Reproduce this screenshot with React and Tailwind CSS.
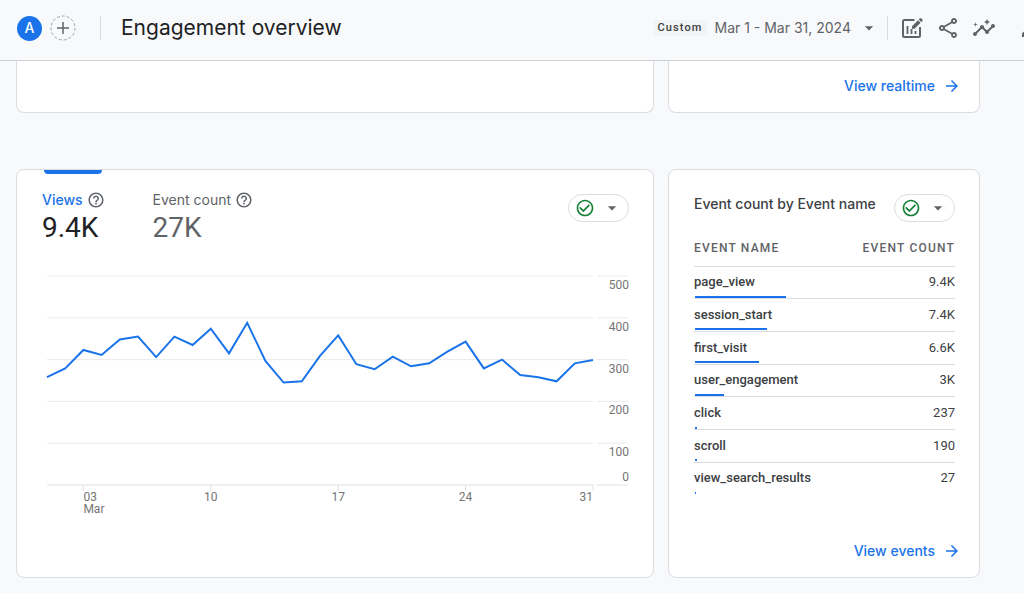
import React from "react";
import {
  MdArrowDropDown,
  MdArrowForward,
  MdCheckCircleOutline,
  MdHelpOutline,
  MdOutlineInsights,
  MdOutlineShare,
} from "react-icons/md";

const dailyViews = [
  258, 279, 323, 311, 348, 355, 306, 355, 335, 374, 315, 388, 297, 245, 248,
  309, 358, 289, 277, 307, 284, 291, 319, 343, 279, 300, 263, 258, 248, 291,
  299,
];

const events = [
  { name: "page_view", label: "9.4K", count: 9400 },
  { name: "session_start", label: "7.4K", count: 7400 },
  { name: "first_visit", label: "6.6K", count: 6600 },
  { name: "user_engagement", label: "3K", count: 3000 },
  { name: "click", label: "237", count: 237 },
  { name: "scroll", label: "190", count: 190 },
  { name: "view_search_results", label: "27", count: 27 },
];

const totalEvents = events.reduce((sum, e) => sum + e.count, 0);

const CustomizeIcon = () => (
  <svg className="h-6 w-6" viewBox="0 0 24 24" fill="none" stroke="currentColor">
    <path
      d="M14.500 4H4.500Q3 4 3 5.500V19.500Q3 21 4.500 21H18.500Q20 21 20 19.500V11"
      strokeWidth="2"
    />
    <path d="M7.500 10v8M11.500 13v5M15.500 15v3" strokeWidth="1.800" />
    <path
      d="M12 12.800v-2.600l6-6 2.600 2.600-6 6zM18.700 3.500l1.300-1.300q.5-.5 1 0l1.600 1.600q.5.5 0 1l-1.300 1.300z"
      fill="currentColor"
      stroke="none"
    />
  </svg>
);

const EditIcon = () => (
  <svg className="h-6 w-6" viewBox="0 0 24 24" fill="currentColor">
    <path d="M2 17.250V21h3.750L17.810 9.940l-3.750-3.750z" />
  </svg>
);

const StatusButton = ({ label }) => (
  <button
    aria-label={label}
    className="flex h-7 w-[61px] shrink-0 items-center justify-between rounded-full border border-[#dadce0] bg-white px-1.5"
  >
    <MdCheckCircleOutline className="h-5 w-5 text-[#188038]" />
    <MdArrowDropDown className="h-5 w-5 text-[#5f6368]" />
  </button>
);

const CardLink = ({ children }) => (
  <a
    href="#"
    className="flex items-center gap-2 self-end text-sm leading-5 font-medium text-[#1a73e8]"
  >
    {children}
    <MdArrowForward className="h-[18px] w-[18px]" />
  </a>
);

const Metric = ({ name, value, active }) => (
  <button className="text-left">
    <span
      className={
        active
          ? "flex items-center gap-1 text-sm leading-5 font-medium text-[#1a73e8]"
          : "flex items-center gap-1 text-sm leading-5 text-[#5f6368]"
      }
    >
      {name}
      <MdHelpOutline className="h-[18px] w-[18px] text-[#5f6368]" />
    </span>
    <span
      className={
        active
          ? "block font-[Roboto] text-[28px] leading-9 text-[#202124]"
          : "block font-[Roboto] text-[28px] leading-9 text-[#5f6368]"
      }
    >
      {value}
    </span>
  </button>
);

const ViewsChart = () => {
  const left = 1;
  const plotWidth = 546;
  const base = 215;
  const x = (i) => left + (i * plotWidth) / (dailyViews.length - 1);
  const y = (v) => base - v * 0.418;
  const points = dailyViews.map((v, i) => `${x(i)},${y(v)}`).join(" ");

  return (
    <svg
      viewBox="0 0 583 250"
      role="img"
      aria-label="Views per day"
      className="w-full font-[Roboto] text-xs"
    >
      {[0, 100, 200, 300, 400, 500].map((v) => (
        <g key={v}>
          <path
            d={`M${left} ${y(v)}H547M551 ${y(v)}H582`}
            stroke={v === 0 ? "#e0e0e0" : "#ebebeb"}
          />
          <text
            x="583"
            y={v === 0 ? base - 4 : y(v) + 13}
            textAnchor="end"
            fill="#757575"
          >
            {v}
          </text>
        </g>
      ))}
      {[2, 9, 16, 23, 30].map((i) => (
        <path key={i} d={`M${x(i)} ${base}v6`} stroke="#e0e0e0" />
      ))}
      <g fill="#757575">
        <text x={x(2)} y="231">03</text>
        <text x={x(2)} y="243">Mar</text>
        <text x={x(9)} y="231" textAnchor="middle">10</text>
        <text x={x(16)} y="231" textAnchor="middle">17</text>
        <text x={x(23)} y="231" textAnchor="middle">24</text>
        <text x={x(30)} y="231" textAnchor="end">31</text>
      </g>
      <polyline points={points} fill="none" stroke="#1a73e8" strokeWidth="2" />
    </svg>
  );
};

const EventTable = () => (
  <table className="mt-2 h-[264px] w-full font-[Roboto] text-[13px] leading-4 text-[#3c4043]">
    <thead>
      <tr className="h-9 border-b border-[#dadce0] text-xs tracking-widest text-[#5f6368]">
        <th className="text-left font-medium">EVENT NAME</th>
        <th className="text-right font-medium">EVENT COUNT</th>
      </tr>
    </thead>
    <tbody>
      {events.map((e) => (
        <tr
          key={e.name}
          className="relative border-b border-[#dadce0] last:border-b-0"
        >
          <td className="font-medium">
            {e.name}
            <span
              className="absolute bottom-0 left-px h-0.5 bg-[#1a73e8]"
              style={{ width: `${(e.count / totalEvents) * 100}%` }}
            />
          </td>
          <td className="text-right">{e.label}</td>
        </tr>
      ))}
    </tbody>
  </table>
);

const Header = () => (
  <header className="sticky top-0 z-10 flex h-[61px] items-center overflow-hidden border-b border-[#cfd1d4] bg-[#f8f9fb] pb-1 pl-[17px] text-[#5f6368]">
    <button
      aria-label="All users"
      className="flex h-[25px] w-[25px] shrink-0 items-center justify-center rounded-full bg-[#1a73e8] text-sm font-medium text-white"
    >
      A
    </button>
    <button aria-label="Add comparison" className="ml-2 shrink-0">
      <svg className="h-[26px] w-[26px]" viewBox="0 0 26 26" fill="none">
        <circle cx="13" cy="13" r="12" stroke="#9aa0a6" strokeDasharray="3 2" />
        <path d="M13 7v12M7 13h12" stroke="#5f6368" strokeWidth="1.500" />
      </svg>
    </button>
    <span className="ml-6 h-6 w-px shrink-0 bg-[#dadce0]" />
    <h1 className="ml-5 text-[21px] leading-7 whitespace-nowrap text-[#202124]">
      Engagement overview
    </h1>
    <button className="ml-auto flex shrink-0 items-center">
      <span className="bg-[#f1f3f4] px-1 font-[Roboto] text-[11px] leading-4 font-medium tracking-widest text-[#3c4043]">
        Custom
      </span>
      <span className="ml-2 text-sm">Mar 1 - Mar 31, 2024</span>
      <MdArrowDropDown className="ml-2 h-5 w-5" />
    </button>
    <span className="ml-2 h-6 w-px shrink-0 bg-[#dadce0]" />
    <div className="-mr-5 ml-3 flex shrink-0 items-center gap-3">
      <button aria-label="Customize report">
        <CustomizeIcon />
      </button>
      <button aria-label="Share">
        <MdOutlineShare className="h-6 w-6" />
      </button>
      <button aria-label="Insights">
        <MdOutlineInsights className="h-6 w-6" />
      </button>
      <button aria-label="Edit" className="ml-3">
        <EditIcon />
      </button>
    </div>
  </header>
);

const App = () => {
  return (
    <div className="min-h-screen bg-[#f8f9fb] font-[Inter,sans-serif]">
      <Header />
      <main className="grid grid-cols-[638fr_312fr] gap-x-3.5 gap-y-14 pr-11 pb-4 pl-4">
        <section className="rounded-b-lg border border-t-0 border-[#dadce0] bg-white" />
        <section className="flex flex-col rounded-b-lg border border-t-0 border-[#dadce0] bg-white px-[18px] pt-[15px] pb-4">
          <CardLink>View realtime</CardLink>
        </section>

        <section className="rounded-lg border border-[#dadce0] bg-white pr-6 pl-[25px]">
          <div className="ml-0.5 h-1 w-[58px] rounded-b bg-[#1a73e8]" />
          <div className="flex items-start pt-4">
            <div className="flex gap-12">
              <Metric name="Views" value="9.4K" active />
              <Metric name="Event count" value="27K" />
            </div>
            <div className="mt-1 ml-auto">
              <StatusButton label="Views data quality" />
            </div>
          </div>
          <div className="mt-6 pl-1">
            <ViewsChart />
          </div>
        </section>

        <section className="flex flex-col rounded-lg border border-[#dadce0] bg-white pt-6 pr-6 pl-[25px]">
          <div className="flex justify-between">
            <h2 className="text-sm leading-5 font-medium whitespace-nowrap text-[#3c4043]">
              Event count by Event name
            </h2>
            <StatusButton label="Events data quality" />
          </div>
          <EventTable />
          <div className="-mr-1.5 flex flex-col pt-[47px] pb-4">
            <CardLink>View events</CardLink>
          </div>
        </section>
      </main>
    </div>
  );
};

export default App;
